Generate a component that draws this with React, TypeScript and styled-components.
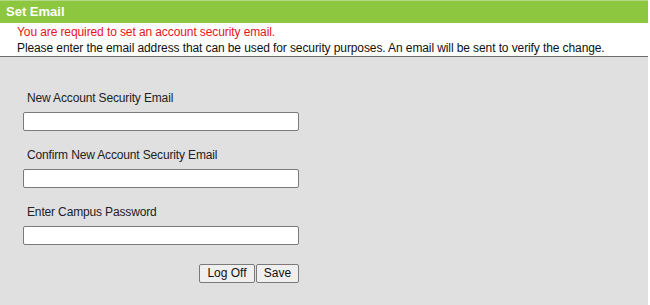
import React from "react";
import styled, { createGlobalStyle } from "styled-components";

const Global = createGlobalStyle`
  html, body { margin: 0; padding: 0; background: #ffffff; }
  body { font-family: "Liberation Sans", Arial, sans-serif; font-size: 12px; }
`;

const Page = styled.div`
  width: 648px;
  display: flex;
  flex-direction: column;
`;

const Header = styled.div`
  height: 22px;
  border-top: 1px solid #b3d982;
  background: #8dc63f;
  color: #ffffff;
  font-weight: bold;
  font-size: 13px;
  line-height: 22px;
  padding-left: 6px;
`;

const Messages = styled.div`
  padding: 1px 0 0 17px;
  line-height: 16px;
  border-bottom: 1px solid #6b6b6b;
  letter-spacing: -0.1px;
`;

const Line = styled.div<{ $error?: boolean }>`
  color: ${(p) => (p.$error ? "#e8141b" : "#111111")};
  white-space: nowrap;
`;

const Panel = styled.div`
  background: #e0e0e0;
  padding: 33px 0 0 23px;
  height: 215px;
  display: flex;
  flex-direction: column;
  gap: 16px;
`;

const Field = styled.div`
  display: flex;
  flex-direction: column;
  gap: 6px;
  width: 276px;
`;

const Label = styled.label`
  color: #222222;
  line-height: 16px;
  padding-left: 4px;
  letter-spacing: -0.15px;
`;

const Input = styled.input`
  box-sizing: border-box;
  width: 276px;
  height: 19px;
  border: 1px solid #7a7a7a;
  border-radius: 2px;
  background: #ffffff;
  margin: 0;
  padding: 0 3px;
  font: inherit;
`;

const Actions = styled.div`
  width: 276px;
  display: flex;
  justify-content: flex-end;
  gap: 1px;
  margin-top: 3px;
`;

const Button = styled.button<{ $w: number }>`
  box-sizing: border-box;
  width: ${(p) => p.$w}px;
  height: 19px;
  padding: 0;
  border: 1px solid #7a7a7a;
  border-radius: 2px;
  background: #efefef;
  color: #111111;
  font-family: "Liberation Sans", Arial, sans-serif;
  font-size: 12px;
  line-height: 17px;
`;

export default function App() {
  return (
    <>
      <Global />
      <Page>
        <Header>Set Email</Header>
        <Messages>
          <Line $error>You are required to set an account security email.</Line>
          <Line>
            Please enter the email address that can be used for security purposes. An email will be sent to verify the change.
          </Line>
        </Messages>
        <Panel>
          <Field>
            <Label>New Account Security Email</Label>
            <Input type="text" />
          </Field>
          <Field>
            <Label>Confirm New Account Security Email</Label>
            <Input type="text" />
          </Field>
          <Field>
            <Label>Enter Campus Password</Label>
            <Input type="password" />
          </Field>
          <Actions>
            <Button $w={56}>Log Off</Button>
            <Button $w={43}>Save</Button>
          </Actions>
        </Panel>
      </Page>
    </>
  );
}
